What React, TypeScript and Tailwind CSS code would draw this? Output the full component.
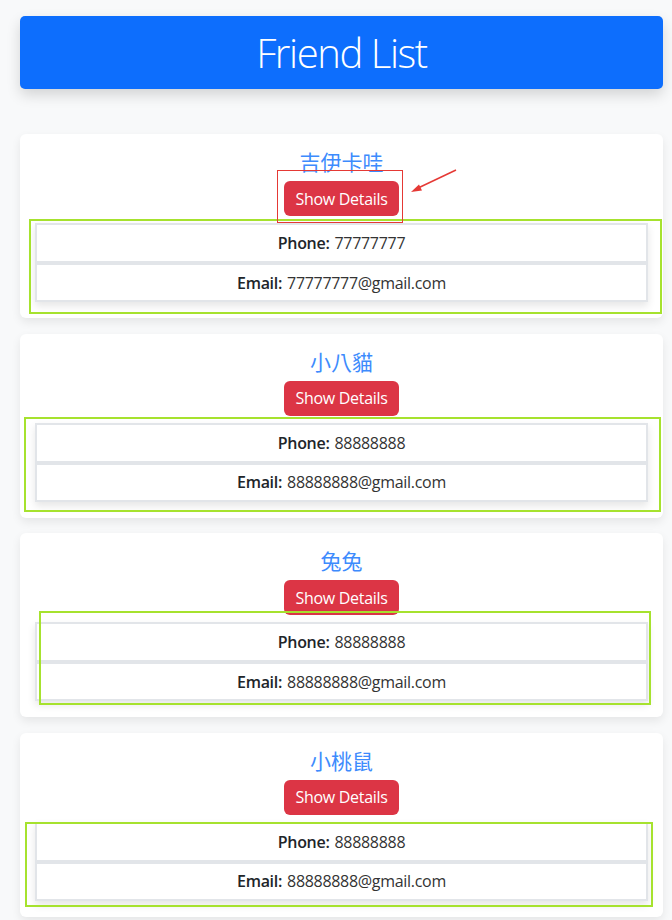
import React from "react";

type Friend = {
  name: string;
  phone: string;
  email: string;
  green: { left: number; top: number; width: number; height: number };
  redBox?: boolean;
};

const friends: Friend[] = [
  { name: "吉伊卡哇", phone: "77777777", email: "77777777@gmail.com", green: { left: 9, top: 85, width: 633, height: 95 }, redBox: true },
  { name: "小八貓", phone: "88888888", email: "88888888@gmail.com", green: { left: 4, top: 83, width: 637, height: 95 } },
  { name: "兔兔", phone: "88888888", email: "88888888@gmail.com", green: { left: 19, top: 78, width: 612, height: 94 } },
  { name: "小桃鼠", phone: "88888888", email: "88888888@gmail.com", green: { left: 5, top: 89, width: 628, height: 85 } },
];

function FriendCard({ f }: { f: Friend }) {
  return (
    <div className="relative bg-white rounded-[6px] shadow-[0_4px_10px_rgba(0,0,0,0.08)] px-[15px] pt-[16px] pb-[16px] flex flex-col items-center">
      <div className="text-[21px] leading-[24px] text-[#3d8bfd] font-normal">{f.name}</div>
      <button className="mt-[7px] h-[35px] px-[11px] rounded-[6px] bg-[#dc3545] text-white text-[16px] leading-[24px] tracking-[-0.3px]">
        Show Details
      </button>
      <div className="mt-[7px] w-full flex flex-col shadow-[0_4px_8px_rgba(0,0,0,0.10)]">
        <div className="h-[40px] flex items-center justify-center border-2 border-[#e2e5e9] bg-white text-[16px] text-[#212529] tracking-[-0.3px]">
          <span className="font-semibold">Phone:</span>
          <span className="ml-[5px] text-[#333]">{f.phone}</span>
        </div>
        <div className="h-[40px] flex items-center justify-center border-2 border-t-[3px] border-[#e2e5e9] bg-white text-[16px] text-[#212529] -mt-[1px] tracking-[-0.3px]">
          <span className="font-semibold">Email:</span>
          <span className="ml-[5px] text-[#333]">{f.email}</span>
        </div>
      </div>
      <div
        className="absolute border-2 border-[#a6e22e] pointer-events-none"
        style={{ left: f.green.left, top: f.green.top, width: f.green.width, height: f.green.height }}
      />
      {f.redBox && (
        <>
          <div className="absolute left-[257px] top-[36px] w-[126px] h-[53px] border-[1.5px] border-[#e53935] pointer-events-none" />
          <svg className="absolute left-[388px] top-[34px] pointer-events-none" width="52" height="26" viewBox="0 0 52 26">
            <line x1="48" y1="2" x2="8" y2="21" stroke="#e53935" strokeWidth="1.5" />
            <polygon points="3,24 11,16.5 14,22.5" fill="#e53935" />
          </svg>
        </>
      )}
    </div>
  );
}

export default function App() {
  return (
    <div
      className="min-h-[920px] bg-[#f8f9fa] pt-[16px] pb-[20px]"
      style={{ fontFamily: '"Open Sans", "Noto Sans CJK TC", sans-serif' }}
    >
      <div className="ml-[20px] w-[643px]">
        <div className="h-[73px] bg-[#0d6efd] rounded-[5px] shadow-[0_6px_14px_rgba(0,0,0,0.15)] flex items-center justify-center">
          <h1 className="text-white text-[40px] font-light tracking-[-1.4px] leading-none">Friend List</h1>
        </div>
        <div className="mt-[45px] flex flex-col gap-[15.5px]">
          {friends.map((f, i) => (
            <FriendCard key={i} f={f} />
          ))}
        </div>
      </div>
    </div>
  );
}
